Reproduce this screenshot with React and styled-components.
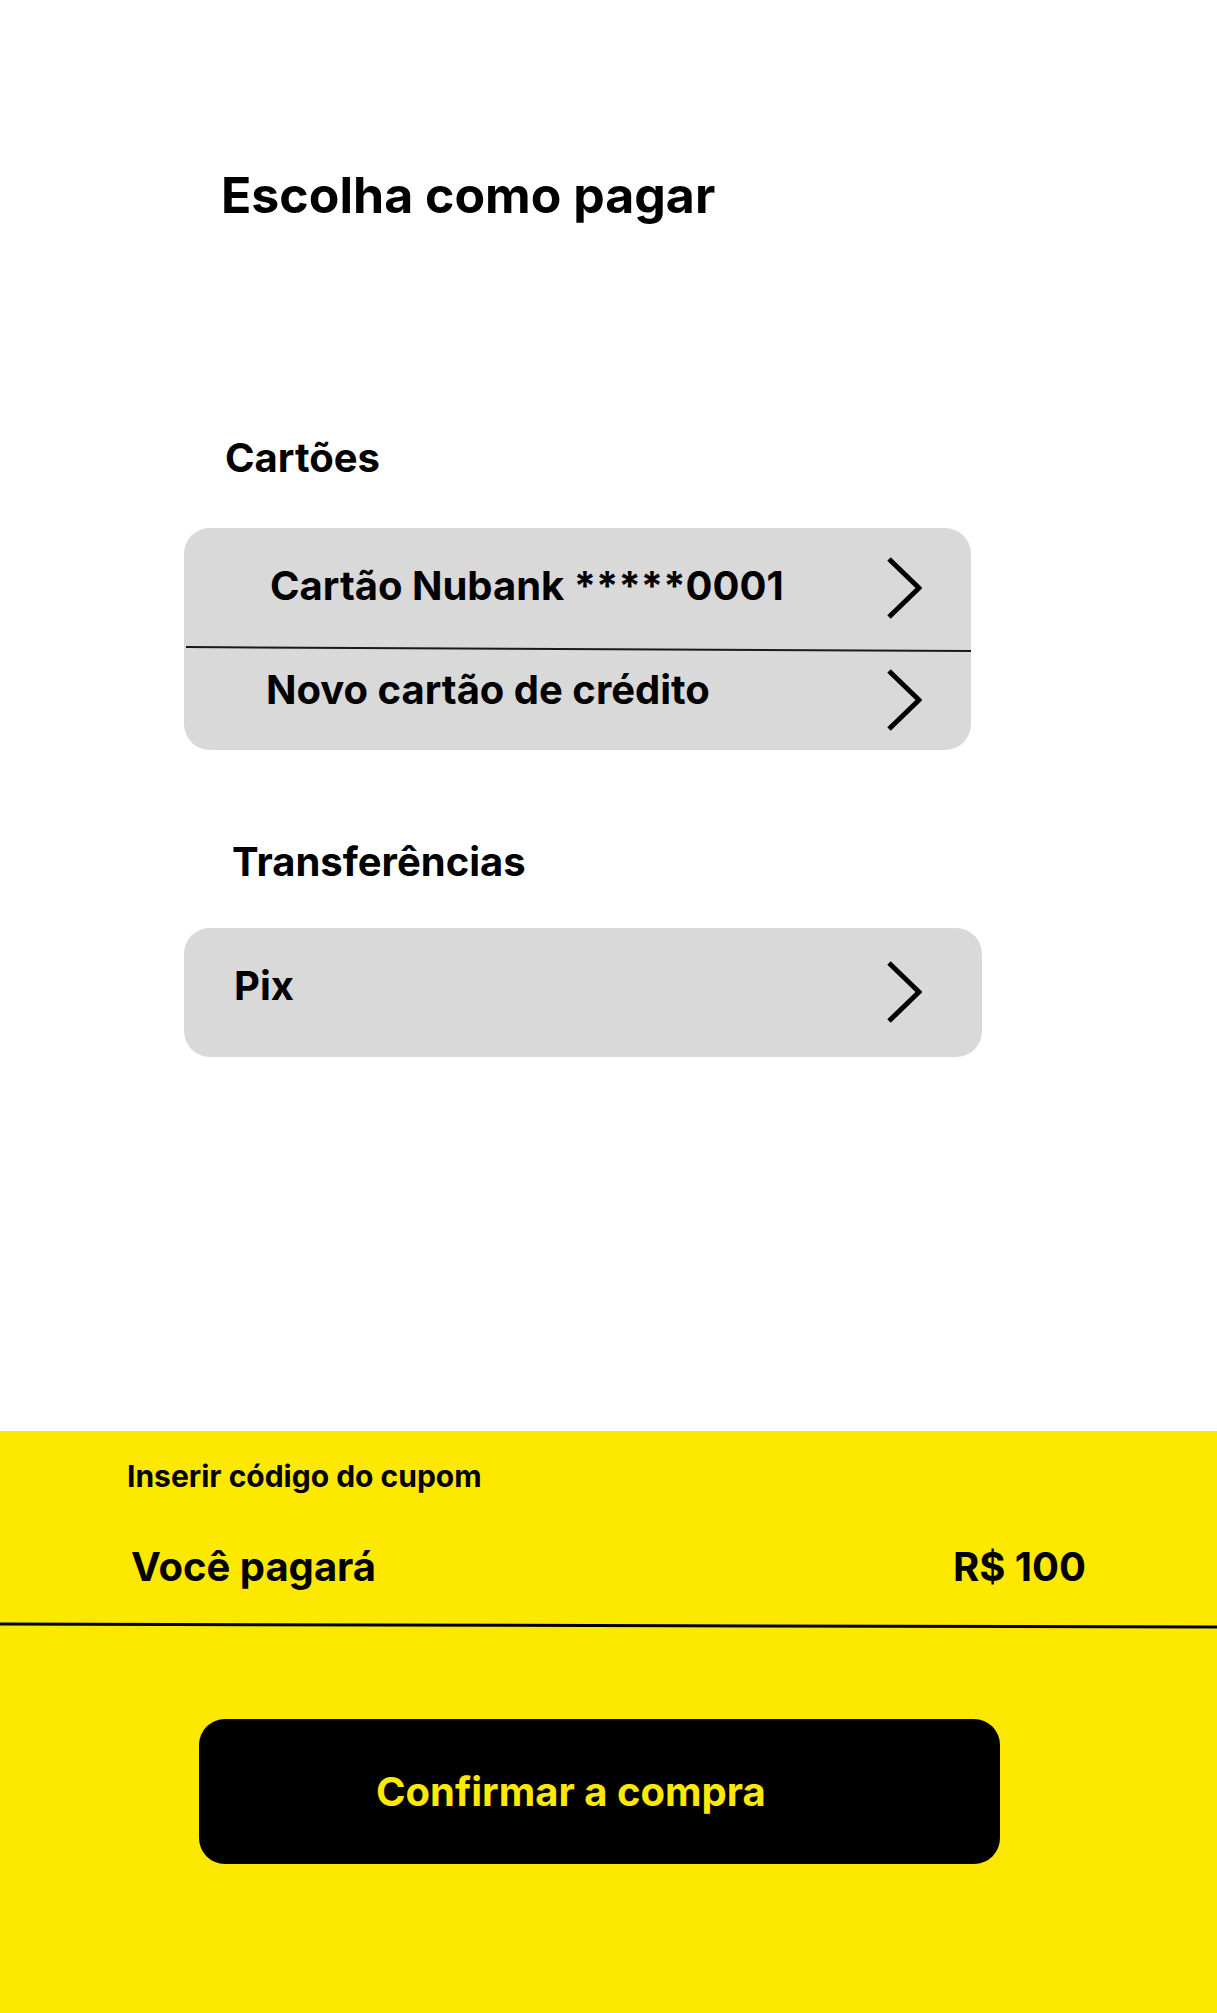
import React from 'react'
import styled, {createGlobalStyle} from 'styled-components'

const GlobalStyle = createGlobalStyle`
  html, body {
    margin: 0;
    padding: 0;
    background: #fff;
  }
  body {
    font-family: Inter, "Noto Sans", sans-serif;
    color: #000;
  }
`;

const YELLOW = '#fde800';
const GRAY = '#d9d9d9';

const Page = styled.div`
  width: 1217px;
  min-height: 2013px;
  display: flex;
  flex-direction: column;
`;

const Main = styled.main`
  flex: 1;
  padding: 165px 0 0 184px;
  display: flex;
  flex-direction: column;
  align-items: flex-start;
`;

const Title = styled.h1`
  margin: 0 0 0 37px;
  font-size: 50px;
  font-weight: 700;
  line-height: 1.2;
`;

const SectionTitle = styled.h2`
  margin: ${p => p.top}px 0 0 ${p => p.left}px;
  font-size: 40px;
  font-weight: 700;
  line-height: 1.2;
`;

const Card = styled.div`
  margin-top: ${p => p.top}px;
  width: ${p => p.width}px;
  background: ${GRAY};
  border-radius: 26px;
  display: flex;
  flex-direction: column;
  overflow: hidden;
`;

const Row = styled.div`
  height: ${p => p.height}px;
  display: flex;
  align-items: center;
  padding: 0 ${p => p.padRight}px 0 ${p => p.padLeft}px;
`;

const Label = styled.span`
  font-size: 40px;
  font-weight: 700;
  line-height: 1.2;
  margin-bottom: ${p => p.lift || 0}px;
`;

const Chevron = styled.svg`
  margin-left: auto;
  flex-shrink: 0;
  width: 36px;
  height: 62px;
`;

const Divider = styled.div`
  height: 1.5px;
  margin-left: 2px;
  background: #1a1a1a;
  transform: rotate(0.28deg);
`;

const Footer = styled.footer`
  height: 582px;
  background: ${YELLOW};
  display: flex;
  flex-direction: column;
  padding-top: 27px;
  box-sizing: border-box;
`;

const Coupon = styled.div`
  margin-left: 127px;
  font-size: 30px;
  font-weight: 700;
  line-height: 1.2;
`;

const TotalRow = styled.div`
  margin-top: 49px;
  padding: 0 131px;
  display: flex;
  justify-content: space-between;
  align-items: baseline;
  font-size: 40px;
  font-weight: 700;
  line-height: 1.2;
`;

const FooterLine = styled.div`
  margin-top: 33px;
  height: 3px;
  background: #000;
  transform: rotate(0.14deg);
`;

const ConfirmButton = styled.button`
  margin: 92px 0 0 199px;
  width: 801px;
  height: 145px;
  border: none;
  border-radius: 26px;
  background: #000;
  color: ${YELLOW};
  font-family: Inter, "Noto Sans", sans-serif;
  font-size: 40px;
  font-weight: 700;
  display: flex;
  align-items: center;
  padding: 0 0 0 177px;
  cursor: pointer;
`;

const Arrow = () => (
    <Chevron viewBox="0 0 36 62">
        <polyline points="3,2 33,31 3,60" fill="none" stroke="#000" strokeWidth="5"/>
    </Chevron>
);

export default function App() {
    return (
        <Page>
            <GlobalStyle/>
            <Main>
                <Title>Escolha como pagar</Title>

                <SectionTitle top={209} left={41}>Cartões</SectionTitle>
                <Card top={46} width={787}>
                    <Row height={120} padLeft={86} padRight={49}>
                        <Label lift={5}>Cartão Nubank *****0001</Label>
                        <Arrow/>
                    </Row>
                    <Divider/>
                    <Row height={100} padLeft={82} padRight={49}>
                        <Label lift={19}>Novo cartão de crédito</Label>
                        <Arrow/>
                    </Row>
                </Card>

                <SectionTitle top={88} left={48}>Transferências</SectionTitle>
                <Card top={42} width={798}>
                    <Row height={129} padLeft={50} padRight={60}>
                        <Label lift={12}>Pix</Label>
                        <Arrow/>
                    </Row>
                </Card>
            </Main>

            <Footer>
                <Coupon>Inserir código do cupom</Coupon>
                <TotalRow>
                    <span>Você pagará</span>
                    <span>R$ 100</span>
                </TotalRow>
                <FooterLine/>
                <ConfirmButton>Confirmar a compra</ConfirmButton>
            </Footer>
        </Page>
    )
}
